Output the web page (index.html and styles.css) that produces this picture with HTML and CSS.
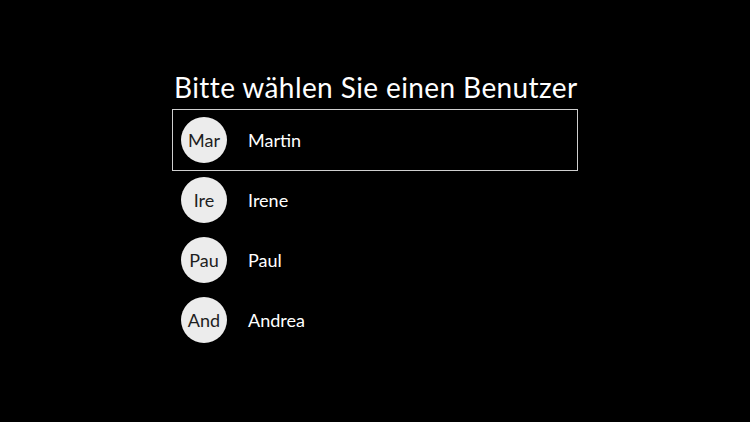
FILE: index.html
```html
<!DOCTYPE html>
<html lang="de">
<head>
  <meta charset="UTF-8">
  <title>Benutzer wählen</title>
  <link rel="stylesheet" href="styles.css">
</head>
<body>
  <div class="user-select">
    <h1 class="user-select-title">Bitte wählen Sie einen Benutzer</h1>
    <ul class="user-list">
      <li class="user-item selected">
        <span class="user-avatar">Mar</span>
        <span class="user-name">Martin</span>
      </li>
      <li class="user-item">
        <span class="user-avatar">Ire</span>
        <span class="user-name">Irene</span>
      </li>
      <li class="user-item">
        <span class="user-avatar">Pau</span>
        <span class="user-name">Paul</span>
      </li>
      <li class="user-item">
        <span class="user-avatar">And</span>
        <span class="user-name">Andrea</span>
      </li>
    </ul>
  </div>
</body>
</html>
```

FILE: styles.css
```css
* {
  margin: 0;
  padding: 0;
  box-sizing: border-box;
}
body {
  font-family: 'Lato', 'Open Sans', sans-serif;
  background-color: #000000;
  color: #ffffff;
  min-height: 100vh;
  display: flex;
  align-items: center;
  justify-content: center;
}
.user-select {
  width: 404px;
}
.user-select-title {
  font-size: 28px;
  font-weight: 400;
  line-height: 30px;
  letter-spacing: 0.4px;
  margin-bottom: 8px;
  padding-left: 1px;
  white-space: nowrap;
}
.user-list {
  list-style: none;
}
.user-item {
  height: 60px;
  display: flex;
  align-items: center;
  gap: 21px;
  padding-left: 8px;
}
.user-item.selected {
  outline: 1px solid #cfcfcf;
}
.user-avatar {
  width: 46px;
  height: 46px;
  border-radius: 50%;
  background-color: #ececec;
  color: #1e1e1e;
  font-size: 18px;
  display: flex;
  align-items: center;
  justify-content: center;
}
.user-name {
  font-size: 18px;
}
```
